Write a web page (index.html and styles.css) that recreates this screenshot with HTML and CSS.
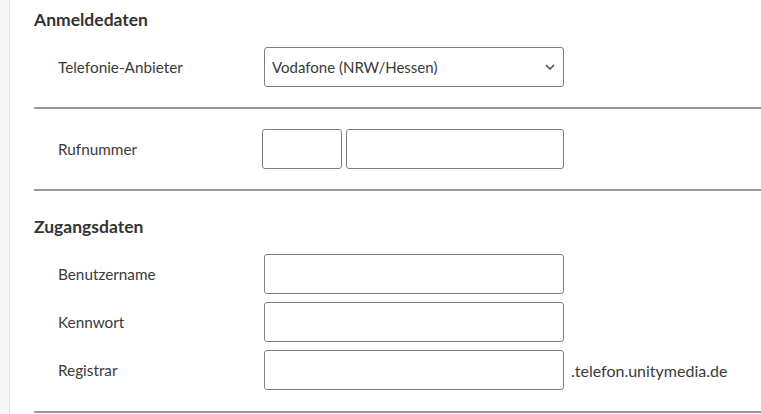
FILE: index.html
```html
<!DOCTYPE html>
<html lang="de">
<head>
<meta charset="utf-8">
<title>Telefonie</title>
<link rel="stylesheet" href="styles.css">
</head>
<body>
<div class="page">
  <aside class="strip"></aside>
  <main class="content">
    <section class="group first">
      <h2 class="heading">Anmeldedaten</h2>
      <div class="row">
        <span class="label">Telefonie-Anbieter</span>
        <div class="select">
          <span class="select-text">Vodafone (NRW/Hessen)</span>
          <svg class="chevron" width="10" height="6" viewBox="0 0 10 6"><path d="M1 1 L5 5 L9 1" fill="none" stroke="#444" stroke-width="1.5"/></svg>
        </div>
      </div>
    </section>
    <hr class="divider">
    <section class="group">
      <div class="row">
        <span class="label">Rufnummer</span>
        <div class="phone">
          <div class="field field-prefix"></div>
          <div class="field field-number"></div>
        </div>
      </div>
    </section>
    <hr class="divider">
    <section class="group spaced">
      <h2 class="heading">Zugangsdaten</h2>
      <div class="rows">
        <div class="row">
          <span class="label">Benutzername</span>
          <div class="field field-wide"></div>
        </div>
        <div class="row">
          <span class="label">Kennwort</span>
          <div class="field field-wide"></div>
        </div>
        <div class="row">
          <span class="label">Registrar</span>
          <div class="field field-wide"></div>
          <span class="suffix">.telefon.unitymedia.de</span>
        </div>
      </div>
    </section>
    <hr class="divider last">
  </main>
</div>
</body>
</html>
```
FILE: styles.css
```css
* { box-sizing: border-box; }
html, body { margin: 0; padding: 0; background: #fff; }
body {
  font-family: Lato, "Noto Sans", sans-serif;
  color: #3a3a3a;
  font-size: 15.3px;
}
.page { display: flex; min-height: 414px; }
.strip {
  width: 10px;
  flex: 0 0 10px;
  background: #f7f7f7;
  border-right: 1px solid #dcdcdc;
}
.content { flex: 1; padding: 8px 0 0 24px; }
.group.spaced { padding-top: 24px; }
.heading {
  margin: 0 0 15px;
  font-size: 17.5px;
  line-height: 24px;
  font-weight: 700;
  color: #333;
}
.rows { display: flex; flex-direction: column; gap: 8px; }
.row { display: flex; align-items: center; height: 40px; padding-left: 24px; }
.label { width: 206px; flex: 0 0 206px; }
.select {
  width: 300px;
  height: 40px;
  border: 1px solid #808080;
  border-radius: 3px;
  display: flex;
  align-items: center;
  justify-content: space-between;
  padding: 0 8px 0 7px;
  font-size: 15px;
}
.chevron { display: block; }
.phone { display: flex; gap: 4px; margin-left: -2px; }
.field {
  height: 40px;
  border: 1px solid #808080;
  border-radius: 3px;
}
.field-prefix { width: 80px; }
.field-number { width: 218px; }
.field-wide { width: 300px; }
.suffix { margin-left: 7px; font-size: 16px; }
.divider {
  margin: 20px 0 0;
  border: 0;
  border-top: 2px solid #999;
  height: 0;
}
.divider + .group { padding-top: 20px; }
.divider + .group.spaced { padding-top: 24px; }
.divider.last { margin-top: 21px; }
```
